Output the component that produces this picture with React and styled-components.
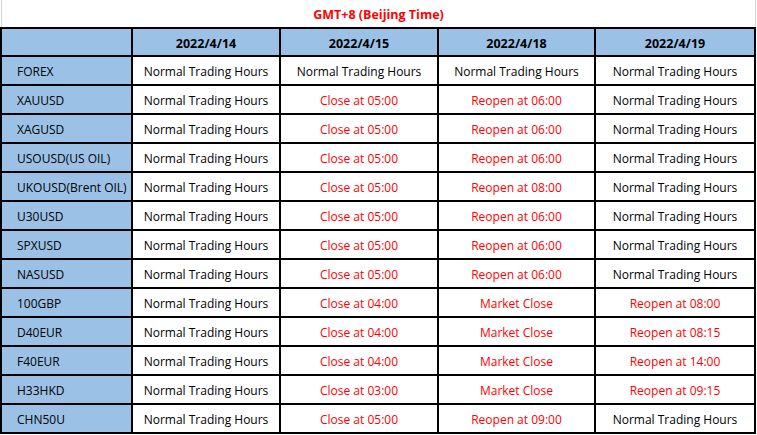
import React from "react";
import styled, { createGlobalStyle } from "styled-components";

const GlobalStyle = createGlobalStyle`
  html, body {
    margin: 0;
    padding: 0;
    background: #fff;
  }
  body {
    font-family: "Open Sans", "Noto Sans", sans-serif;
    color: #000;
  }
`;

const N = "Normal Trading Hours";

const dates = ["2022/4/14", "2022/4/15", "2022/4/18", "2022/4/19"];

const rows = [
  { name: "FOREX", cells: [N, N, N, N] },
  { name: "XAUUSD", cells: [N, "Close at 05:00", "Reopen at 06:00", N] },
  { name: "XAGUSD", cells: [N, "Close at 05:00", "Reopen at 06:00", N] },
  { name: "USOUSD(US OIL)", cells: [N, "Close at 05:00", "Reopen at 06:00", N] },
  { name: "UKOUSD(Brent OIL)", cells: [N, "Close at 05:00", "Reopen at 08:00", N] },
  { name: "U30USD", cells: [N, "Close at 05:00", "Reopen at 06:00", N] },
  { name: "SPXUSD", cells: [N, "Close at 05:00", "Reopen at 06:00", N] },
  { name: "NASUSD", cells: [N, "Close at 05:00", "Reopen at 06:00", N] },
  { name: "100GBP", cells: [N, "Close at 04:00", "Market Close", "Reopen at 08:00"] },
  { name: "D40EUR", cells: [N, "Close at 04:00", "Market Close", "Reopen at 08:15"] },
  { name: "F40EUR", cells: [N, "Close at 04:00", "Market Close", "Reopen at 14:00"] },
  { name: "H33HKD", cells: [N, "Close at 03:00", "Market Close", "Reopen at 09:15"] },
  { name: "CHN50U", cells: [N, "Close at 05:00", "Reopen at 09:00", N] },
];

const App = () => (
  <Page>
    <GlobalStyle />
    <Title>GMT+8 (Beijing Time)</Title>
    <Grid>
      <HeadCell />
      {dates.map((d) => (
        <HeadCell key={d}>{d}</HeadCell>
      ))}
      {rows.map((row) => (
        <React.Fragment key={row.name}>
          <NameCell>{row.name}</NameCell>
          {row.cells.map((c, i) => (
            <Cell key={i} $red={c !== N}>
              {c}
            </Cell>
          ))}
        </React.Fragment>
      ))}
    </Grid>
  </Page>
);

const Page = styled.div`
  width: 757px;
  height: 435px;
  overflow: hidden;
`;

const Title = styled.div`
  width: 755px;
  height: 27px;
  margin-left: 1px;
  border-left: 1px solid #d4d4d4;
  border-right: 1px solid #d4d4d4;
  display: flex;
  align-items: center;
  justify-content: center;
  color: #ff0000;
  font-weight: 700;
  font-size: 12.5px;
  padding-top: 2px;
  box-sizing: border-box;
`;

const Grid = styled.div`
  display: grid;
  grid-template-columns: 129px 146px 156px 155px 158px;
  grid-template-rows: 26px repeat(13, 27px);
  gap: 2px;
  padding: 2px;
  width: 756px;
  box-sizing: border-box;
  background: #000;
`;

const CellBase = styled.div`
  display: flex;
  align-items: center;
  font-size: 12px;
  white-space: nowrap;
  overflow: hidden;
  padding-top: 2px;
  box-sizing: border-box;
`;

const HeadCell = styled(CellBase)`
  background: #9bc2e6;
  justify-content: center;
  font-weight: 700;
  font-size: 12.5px;
`;

const NameCell = styled(CellBase)`
  background: #9bc2e6;
  padding-left: 15px;
`;

const Cell = styled(CellBase)`
  background: #fff;
  justify-content: center;
  color: ${(p) => (p.$red ? "#ff0000" : "#000")};
`;

export default App;
